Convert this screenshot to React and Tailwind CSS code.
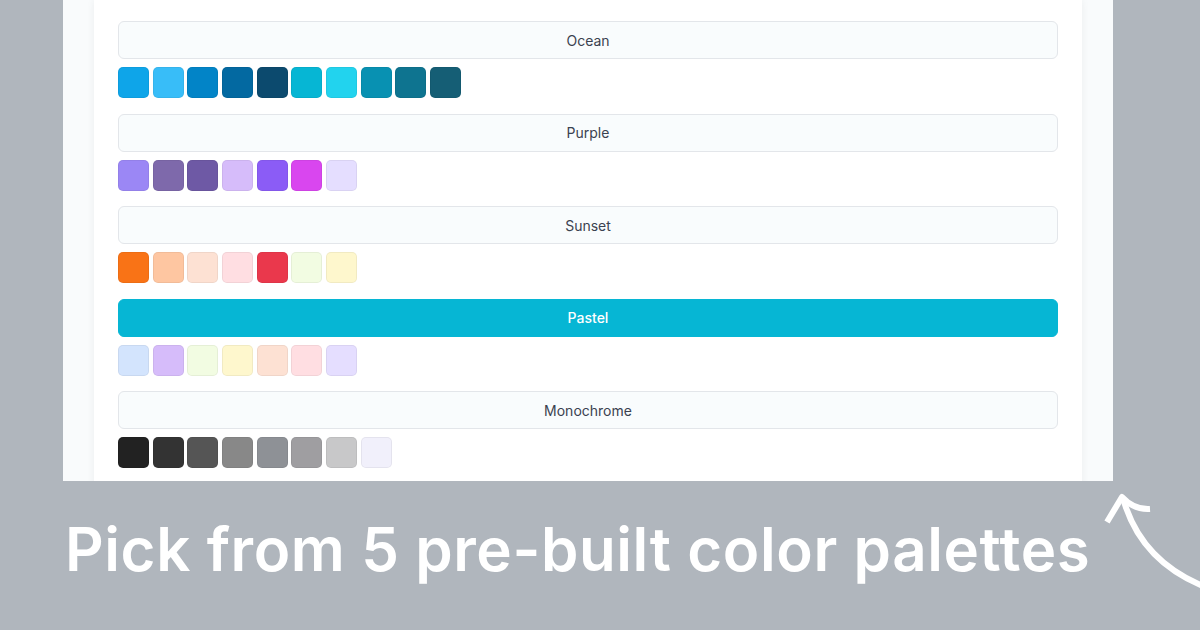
import React from "react";

const palettes = [
  { name: "Ocean", colors: ["#0ea5e9", "#38bdf8", "#0284c7", "#0369a1", "#0c4a6e", "#06b6d4", "#22d3ee", "#0891b2", "#0e7490", "#155e75"] },
  { name: "Purple", colors: ["#9b87f5", "#7e69ab", "#6e59a5", "#d6bcfa", "#8b5cf6", "#d946ef", "#e5deff"] },
  { name: "Sunset", colors: ["#f97316", "#fec6a1", "#fde1d3", "#ffdee2", "#ea384c", "#f2fce2", "#fef7cd"] },
  { name: "Pastel", colors: ["#d3e4fd", "#d6bcfa", "#f2fce2", "#fef7cd", "#fde1d3", "#ffdee2", "#e5deff"], active: true },
  { name: "Monochrome", colors: ["#222222", "#333333", "#555555", "#888888", "#8e9196", "#9f9ea1", "#c8c8c9", "#f1f0fb"] },
];

export default function App() {
  return (
    <div
      className="relative w-[1200px] h-[630px] overflow-hidden bg-[#b0b6bd]"
      style={{ fontFamily: "Inter, 'Noto Sans', sans-serif" }}
    >
      <div className="ml-[63px] w-[1050px] h-[481px] overflow-hidden bg-[#f9fbfc]">
        <div className="ml-[31px] w-[988px] h-[520px] bg-white shadow-[0_0_8px_rgba(0,0,0,0.06)] px-[24px] pt-[21px] flex flex-col gap-[15.5px]">
          {palettes.map((p) => (
            <div key={p.name} className="flex flex-col gap-[8px]">
              <div
                className={
                  p.active
                    ? "h-[38px] rounded-[6px] bg-[#06b6d4] border border-[#06b6d4] flex items-center justify-center text-[14px] font-medium text-white"
                    : "h-[38px] rounded-[6px] bg-[#f9fcfd] border border-[#e3e6ea] flex items-center justify-center text-[14px] text-[#3b4250]"
                }
              >
                {p.name}
              </div>
              <div className="flex gap-[3.67px]">
                {p.colors.map((c, i) => (
                  <div
                    key={i}
                    className="w-[31px] h-[31px] rounded-[5px] border border-black/5"
                    style={{ backgroundColor: c }}
                  />
                ))}
              </div>
            </div>
          ))}
        </div>
      </div>
      <div className="pl-[65px] pt-[38px] text-white font-semibold text-[60px] leading-[1] tracking-[0.6px] whitespace-nowrap">
        Pick from 5 pre-built color palettes
      </div>
      <svg className="absolute left-0 top-0" width="1200" height="630" viewBox="0 0 1200 630" fill="none">
        <path d="M1203 586 Q1140 560 1123 498" stroke="white" strokeWidth="6" strokeLinecap="butt" fill="none" />
        <path d="M1107 522 L1122 497 Q1134 510 1150 509" stroke="white" strokeWidth="6" strokeLinejoin="round" fill="none" />
      </svg>
    </div>
  );
}
